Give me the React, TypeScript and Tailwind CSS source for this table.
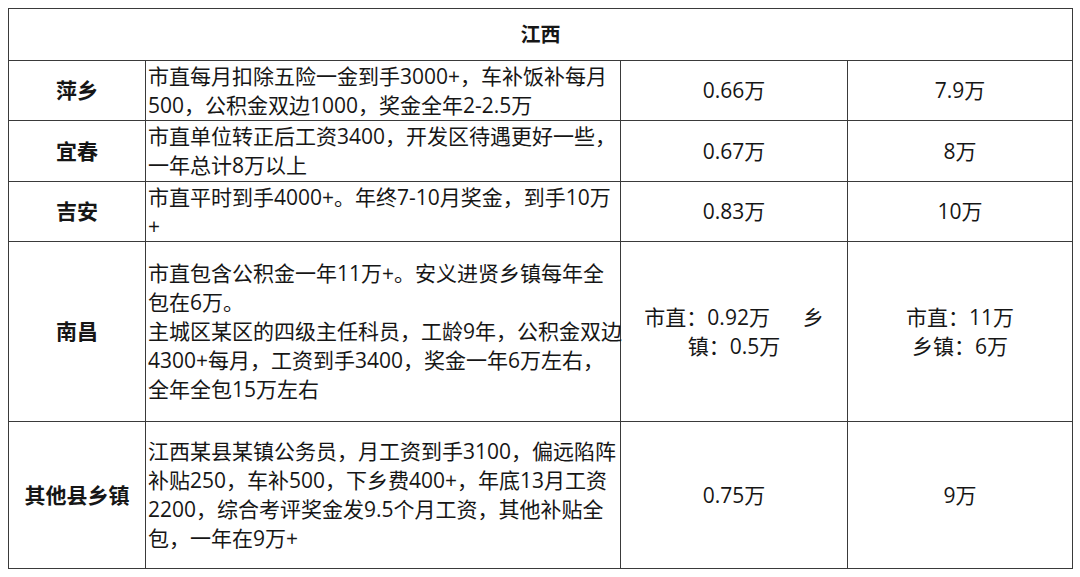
import React from 'react';

type Row = {
  city: string;
  h: string;
  detail: string[];
  avg: string[];
  year: string[];
};

const rows: Row[] = [
  {
    city: '萍乡',
    h: 'h-[60px]',
    detail: ['市直每月扣除五险一金到手3000+，车补饭补每月', '500，公积金双边1000，奖金全年2-2.5万'],
    avg: ['0.66万'],
    year: ['7.9万'],
  },
  {
    city: '宜春',
    h: 'h-[61px]',
    detail: ['市直单位转正后工资3400，开发区待遇更好一些，', '一年总计8万以上'],
    avg: ['0.67万'],
    year: ['8万'],
  },
  {
    city: '吉安',
    h: 'h-[60px]',
    detail: ['市直平时到手4000+。年终7-10月奖金，到手10万', '+'],
    avg: ['0.83万'],
    year: ['10万'],
  },
  {
    city: '南昌',
    h: 'h-[180px]',
    detail: [
      '市直包含公积金一年11万+。安义进贤乡镇每年全',
      '包在6万。',
      '主城区某区的四级主任科员，工龄9年，公积金双边',
      '4300+每月，工资到手3400，奖金一年6万左右，',
      '全年全包15万左右',
    ],
    avg: ['市直：0.92万      乡', '镇：0.5万'],
    year: ['市直：11万', '乡镇：6万'],
  },
  {
    city: '其他县乡镇',
    h: 'h-[147px]',
    detail: [
      '江西某县某镇公务员，月工资到手3100，偏远陷阵',
      '补贴250，车补500，下乡费400+，年底13月工资',
      '2200，综合考评奖金发9.5个月工资，其他补贴全',
      '包，一年在9万+',
    ],
    avg: ['0.75万'],
    year: ['9万'],
  },
];

const cell = 'border-r border-b border-[#3a3a3a] flex flex-col justify-center';

export default function App() {
  return (
    <div
      className="w-[1080px] h-[577px] bg-white pt-[8px] pl-[8px] text-[#161616]"
      style={{ fontFamily: '"Open Sans", "Noto Sans CJK SC", sans-serif' }}
    >
      <div className="grid grid-cols-[137px_475px_227px_225px] w-fit border-t border-l border-[#3a3a3a] text-[21px] leading-[29px]">
        <div className={`${cell} col-span-4 h-[52px] items-center font-bold text-[20px]`}>江西</div>
        {rows.map((r) => (
          <React.Fragment key={r.city}>
            <div className={`${cell} ${r.h} items-center font-bold`}>{r.city}</div>
            <div className={`${cell} ${r.h} pl-[2px]`}>
              {r.detail.map((l, i) => (
                <div key={i} className="whitespace-nowrap">{l}</div>
              ))}
            </div>
            <div className={`${cell} ${r.h} items-center`}>
              {r.avg.map((l, i) => (
                <div key={i} className="whitespace-pre">{l}</div>
              ))}
            </div>
            <div className={`${cell} ${r.h} items-center`}>
              {r.year.map((l, i) => (
                <div key={i} className="whitespace-pre">{l}</div>
              ))}
            </div>
          </React.Fragment>
        ))}
      </div>
    </div>
  );
}
